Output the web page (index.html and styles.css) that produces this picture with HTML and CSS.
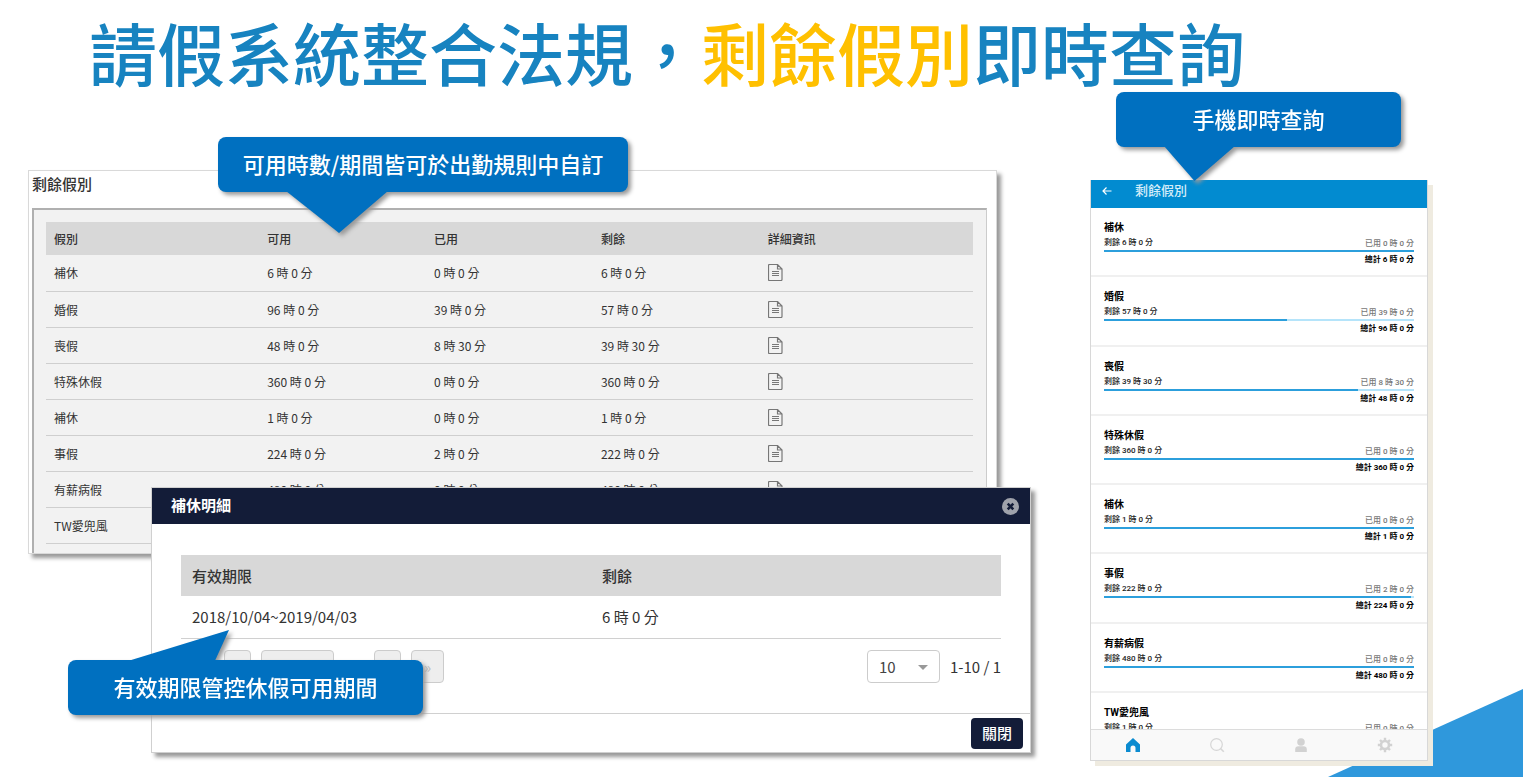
FILE: index.html
```html
<!DOCTYPE html>
<html lang="zh-Hant">
<head>
<meta charset="utf-8">
<meta name="viewport" content="width=device-width, initial-scale=1">
<title>請假系統整合法規</title>
<link rel="stylesheet" href="styles.css">
</head>
<body>
<svg class="sprite" aria-hidden="true">
  <symbol id="doc" viewBox="0 0 15 17">
    <path d="M.5 1.500q0-1 1-1h8l4.500 4.500v10.500q0 1-1 1h-11.500q-1 0-1-1z M9.500.5v4.500h4.500" fill="none" stroke="#777" stroke-width="1.200"/>
    <path d="M4 7.500h7M4 9.500h7M4 11.500h7" stroke="#777" stroke-width="1.200" fill="none"/>
  </symbol>
</svg>
<main class="slide">
  <div class="corner"></div>
  <h1 class="headline">請假系統整合法規，<span class="accent">剩餘假別</span>即時查詢</h1>
  <div class="stage">
    <div class="desk">
      <section class="panel">
        <h2 class="panel-title">剩餘假別</h2>
        <div class="panel-box">
          <table class="leave">
            <thead><tr><th scope="col" class="wide">假別</th><th scope="col">可用</th><th scope="col">已用</th><th scope="col">剩餘</th><th scope="col" class="wide">詳細資訊</th></tr></thead>
            <tbody>
              <tr><td>補休</td><td>6 時 0 分</td><td>0 時 0 分</td><td>6 時 0 分</td><td><button class="doc" aria-label="詳細資訊"><svg><use href="#doc"/></svg></button></td></tr>
              <tr><td>婚假</td><td>96 時 0 分</td><td>39 時 0 分</td><td>57 時 0 分</td><td><button class="doc" aria-label="詳細資訊"><svg><use href="#doc"/></svg></button></td></tr>
              <tr><td>喪假</td><td>48 時 0 分</td><td>8 時 30 分</td><td>39 時 30 分</td><td><button class="doc" aria-label="詳細資訊"><svg><use href="#doc"/></svg></button></td></tr>
              <tr><td>特殊休假</td><td>360 時 0 分</td><td>0 時 0 分</td><td>360 時 0 分</td><td><button class="doc" aria-label="詳細資訊"><svg><use href="#doc"/></svg></button></td></tr>
              <tr><td>補休</td><td>1 時 0 分</td><td>0 時 0 分</td><td>1 時 0 分</td><td><button class="doc" aria-label="詳細資訊"><svg><use href="#doc"/></svg></button></td></tr>
              <tr><td>事假</td><td>224 時 0 分</td><td>2 時 0 分</td><td>222 時 0 分</td><td><button class="doc" aria-label="詳細資訊"><svg><use href="#doc"/></svg></button></td></tr>
              <tr><td>有薪病假</td><td>480 時 0 分</td><td>0 時 0 分</td><td>480 時 0 分</td><td><button class="doc" aria-label="詳細資訊"><svg><use href="#doc"/></svg></button></td></tr>
              <tr><td>TW愛兜風</td><td></td><td></td><td></td><td></td></tr>
            </tbody>
          </table>
        </div>
      </section>

      <section class="modal">
        <header class="modal-head">
          <h2 class="modal-title">補休明細</h2>
          <button class="close-x" aria-label="關閉視窗"><svg viewBox="0 0 17 17"><circle cx="8.500" cy="8.500" r="8.500" fill="#9fa2ab"/><path d="M5.700 5.700l5.600 5.600M11.300 5.700l-5.600 5.600" stroke="#131c38" stroke-width="2.600"/></svg></button>
        </header>
        <div class="modal-body">
          <table class="detail">
            <thead><tr><th scope="col">有效期限</th><th scope="col">剩餘</th></tr></thead>
            <tbody><tr><td>2018/10/04~2019/04/03</td><td>6 時 0 分</td></tr></tbody>
          </table>
          <div class="pager">
            <button class="pg" aria-label="第一頁"></button>
            <button class="pg small" aria-label="上一頁"></button>
            <input class="pg page" aria-label="頁碼">
            <button class="pg small next" aria-label="下一頁"></button>
            <button class="pg" aria-label="最後一頁">»</button>
            <span class="size">
              <select aria-label="每頁筆數"><option>10</option></select>
              <svg class="caret" viewBox="0 0 10 5"><path d="M0 0h10l-5 5z" fill="#999"/></svg>
            </span>
            <span class="range">1-10 / 1</span>
          </div>
        </div>
        <footer class="modal-foot"><button class="close-btn">關閉</button></footer>
      </section>

      <div class="callout callout-rule">可用時數/期間皆可於出勤規則中自訂</div>
      <div class="callout callout-period">有效期限管控休假可用期間</div>
    </div>

    <div class="mobile">
      <section class="phone">
        <header class="phone-head">
          <button class="back" aria-label="返回"><svg viewBox="0 0 10 8"><path d="M9.500 4H1M4.500.5L1 4l3.500 3.500" fill="none" stroke="#fff" stroke-width="1.200"/></svg></button>
          <h2 class="phone-title">剩餘假別</h2>
        </header>
        <ul class="cards">
          <li class="card"><h3>補休</h3><p class="split"><span>剩餘 6 時 0 分</span><span class="used">已用 0 時 0 分</span></p><div class="bar"><div class="fill" style="width:100%"></div></div><p class="total">總計 6 時 0 分</p></li>
          <li class="card"><h3>婚假</h3><p class="split"><span>剩餘 57 時 0 分</span><span class="used">已用 39 時 0 分</span></p><div class="bar"><div class="fill" style="width:59%"></div></div><p class="total">總計 96 時 0 分</p></li>
          <li class="card"><h3>喪假</h3><p class="split"><span>剩餘 39 時 30 分</span><span class="used">已用 8 時 30 分</span></p><div class="bar"><div class="fill" style="width:82%"></div></div><p class="total">總計 48 時 0 分</p></li>
          <li class="card"><h3>特殊休假</h3><p class="split"><span>剩餘 360 時 0 分</span><span class="used">已用 0 時 0 分</span></p><div class="bar"><div class="fill" style="width:100%"></div></div><p class="total">總計 360 時 0 分</p></li>
          <li class="card"><h3>補休</h3><p class="split"><span>剩餘 1 時 0 分</span><span class="used">已用 0 時 0 分</span></p><div class="bar"><div class="fill" style="width:100%"></div></div><p class="total">總計 1 時 0 分</p></li>
          <li class="card"><h3>事假</h3><p class="split"><span>剩餘 222 時 0 分</span><span class="used">已用 2 時 0 分</span></p><div class="bar"><div class="fill" style="width:99%"></div></div><p class="total">總計 224 時 0 分</p></li>
          <li class="card"><h3>有薪病假</h3><p class="split"><span>剩餘 480 時 0 分</span><span class="used">已用 0 時 0 分</span></p><div class="bar"><div class="fill" style="width:100%"></div></div><p class="total">總計 480 時 0 分</p></li>
          <li class="card"><h3>TW愛兜風</h3><p class="split"><span>剩餘 1 時 0 分</span><span class="used">已用 0 時 0 分</span></p></li>
        </ul>
        <nav class="tabs">
          <a href="#home" aria-label="首頁"><svg viewBox="0 0 16 16"><path d="M8 1L1 7.500V14.500q0 .5.500.5H5.500V11a2.500 2.500 0 0 1 5 0v4h4q.5 0 .5-.5V7.500z" fill="#0b8bd0"/></svg></a>
          <a href="#search" aria-label="搜尋"><svg viewBox="0 0 16 16"><circle cx="7.500" cy="7.500" r="5.800" fill="none" stroke="#d6d6d6" stroke-width="1.200"/><path d="M11.500 11.500l3.300 3.300" stroke="#d6d6d6" stroke-width="1.600"/></svg></a>
          <a href="#me" aria-label="個人"><svg viewBox="0 0 16 16"><circle cx="8" cy="5" r="3.800" fill="#d2d2d2"/><path d="M2.200 15v-2.500q0-3.300 3.300-3.300h5q3.300 0 3.300 3.300V15z" fill="#d2d2d2"/></svg></a>
          <a href="#settings" aria-label="設定"><svg viewBox="0 0 16 16"><circle cx="8" cy="8" r="4" fill="none" stroke="#d2d2d2" stroke-width="2.600"/><path d="M8 4V.8M8 12v3.200M4 8H.8M12 8h3.200M5.200 5.200L3 3M10.800 10.800L13 13M10.800 5.200L13 3M5.200 10.800L3 13" stroke="#d2d2d2" stroke-width="2.400"/></svg></a>
        </nav>
      </section>
      <div class="callout callout-mobile">手機即時查詢</div>
    </div>
  </div>
</main>
</body>
</html>
```
FILE: styles.css
```css
* { box-sizing: border-box; }
body, h1, h2, h3, p, ul { margin: 0; padding: 0; }
body {
  background: #fff;
  color: #333;
  font-family: "Noto Sans CJK TC", sans-serif;
}
button, input, select { font: inherit; margin: 0; padding: 0; }
button { border: 0; background: none; cursor: pointer; }
table { width: 100%; border-collapse: collapse; table-layout: fixed; }
th, td { text-align: left; }
.sprite { position: absolute; width: 0; height: 0; }

.slide {
  position: relative;
  min-height: 100vh;
  padding: 8px 95px 10px 28px;
  overflow: hidden;
}
.corner {
  position: absolute;
  right: 0;
  bottom: 0;
  width: 195px;
  height: 88px;
  background: #2f98dc;
  clip-path: polygon(0 100%, 100% 0, 100% 100%);
}
.headline {
  padding-left: 61px;
  color: #1783c0;
  font-size: 68px;
  font-weight: 500;
  line-height: 88px;
  white-space: nowrap;
}
.accent { color: #ffc000; }

.stage {
  position: relative;
  display: grid;
  grid-template-columns: 969fr 338fr;
  gap: 93px;
  align-items: start;
  padding-top: 74px;
}
.desk, .mobile { position: relative; }
.mobile { padding-top: 10px; }

/* Leave balance window */
.panel {
  padding: 0 9px 0 3px;
  border: 1px solid #d9d9d9;
  background: #fff;
  box-shadow: 4px 4px 4px #999;
}
.panel-title {
  font-size: 15px;
  font-weight: 500;
  line-height: 26px;
  padding-bottom: 11px;
}
.panel-box {
  padding: 12px 13px 9px 12px;
  border: solid #b0b0b0;
  border-width: 2px 1px 0 2px;
  border-right-color: #ccc;
  background: #f2f2f2;
}
.leave { font-size: 12px; }
.leave th { width: 18%; height: 33px; padding: 0 8px; background: #d8d8d8; font-weight: 500; }
.leave .wide { width: 23%; }
.leave td { height: 36px; padding: 0 8px; border-bottom: 1px solid #cfcfcf; }
.doc { display: block; width: 15px; height: 17px; }
.doc svg { display: block; width: 15px; height: 17px; }

/* Detail dialog */
.modal {
  position: absolute;
  top: 317px;
  left: 123px;
  right: -34px;
  border: 1px solid #d0d0d0;
  background: #fff;
  box-shadow: 4px 4px 4px #999;
  font-size: 15px;
}
.modal-head {
  display: flex;
  align-items: center;
  justify-content: space-between;
  height: 36px;
  padding: 0 11px 0 19px;
  background: #131c38;
}
.modal-title { padding-bottom: 4px; color: #fff; font-size: 15px; font-weight: 700; }
.close-x, .close-x svg { display: block; width: 17px; height: 17px; }
.modal-body { padding: 31px 29px 30px; }
.detail th { height: 41px; padding: 0 11px; background: #d8d8d8; font-weight: 500; }
.detail td { height: 42px; padding: 0 11px; border-bottom: 1px solid #d0d0d0; }
.pager { display: flex; align-items: center; padding-top: 11px; gap: 10px; }
.pg {
  width: 33px;
  height: 33px;
  border: 1px solid #ccc;
  border-radius: 4px;
  background: #eee;
  color: #bbb;
}
.pg.small { width: 27px; }
.pg.page { width: 73px; }
.pg.next { margin-left: 30px; }
.size { position: relative; margin-left: auto; }
.size select {
  display: block;
  width: 73px;
  height: 33px;
  padding-left: 11px;
  border: 1px solid #ccc;
  border-radius: 4px;
  background: #fff;
  color: #444;
  appearance: none;
}
.caret { position: absolute; top: 15px; right: 12px; width: 10px; height: 5px; }
.modal-foot {
  display: flex;
  justify-content: flex-end;
  padding: 4px 7px 3px;
  border-top: 1px solid #d0d0d0;
}
.close-btn {
  width: 52px;
  height: 31px;
  border-radius: 4px;
  background: #131c38;
  color: #fff;
  font-weight: 500;
  line-height: 28px;
}

/* Callouts */
.callout {
  position: absolute;
  height: 55px;
  border-radius: 8px;
  background: #0070c0;
  color: #fff;
  font-size: 22px;
  font-weight: 500;
  line-height: 52px;
  text-align: center;
  white-space: nowrap;
  filter: drop-shadow(3px 3px 2px #999);
}
.callout::after { content: ""; position: absolute; background: #0070c0; }
.callout-rule { top: -33px; left: 190px; width: 410px; }
.callout-rule::after {
  top: 54px; left: 68px; width: 102px; height: 42px;
  clip-path: polygon(0 0, 100% 0, 52% 100%);
}
.callout-mobile { top: -78px; left: 26px; width: 285px; }
.callout-mobile::after {
  top: 54px; left: 48px; width: 71px; height: 35px;
  clip-path: polygon(0 0, 100% 0, 43% 100%);
}
.callout-period { top: 490px; left: 40px; width: 355px; }
.callout-period::after {
  bottom: 54px; left: 60px; width: 101px; height: 31px;
  clip-path: polygon(0 100%, 86% 100%, 100% 0);
}

/* Phone screen */
.phone {
  border: 1px solid #d8d8d8;
  border-top: 0;
  background: #fff;
  box-shadow: 5px 5px 0 #efebe0;
  font-family: Roboto, "Noto Sans CJK TC", sans-serif;
}
.phone-head {
  display: flex;
  align-items: flex-start;
  gap: 23px;
  height: 28px;
  padding: 0 11px;
  background: #028bd0;
}
.phone-title { color: #d5edf9; font-size: 13px; font-weight: 500; line-height: 21px; }
.back { padding: 7px 0; }
.back svg { display: block; width: 10px; height: 8px; }
.cards {
  display: grid;
  grid-template-rows: repeat(7, 1fr) 36px;
  height: 521px;
  list-style: none;
}
.card {
  padding: 13px 13px 0;
  border-bottom: 2px solid #f0f0f0;
  color: #222;
  font-size: 8px;
  font-weight: 500;
  line-height: 16px;
  overflow: hidden;
}
.card:last-child { border-bottom: 0; }
.card h3 { color: #000; font-size: 10px; font-weight: 700; line-height: 14px; }
.split { display: flex; justify-content: space-between; height: 15px; }
.used { color: #777; padding-top: 1px; }
.bar { height: 2px; background: #b5e4fa; }
.fill { height: 2px; background: #2c9fdc; }
.total { color: #000; font-weight: 700; text-align: right; }
.tabs {
  display: grid;
  grid-template-columns: repeat(4, 1fr);
  border-top: 1px solid #dcdcdc;
  background: #f9f9f9;
}
.tabs a { display: flex; justify-content: center; padding: 7px 0; }
.tabs svg { width: 16px; height: 16px; }
```
